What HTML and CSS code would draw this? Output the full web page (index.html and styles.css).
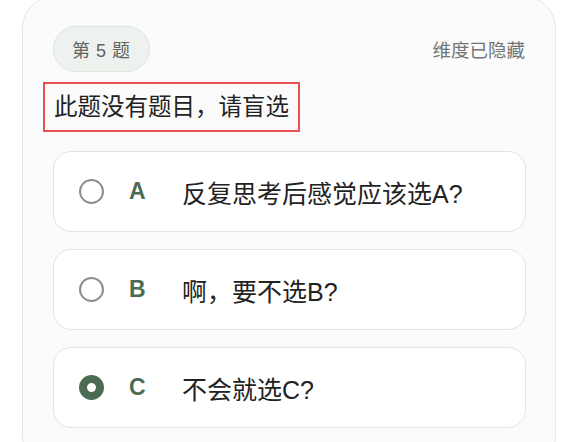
FILE: index.html
```html
<!DOCTYPE html>
<html lang="zh-CN">
<head>
<meta charset="utf-8">
<link rel="stylesheet" href="styles.css">
</head>
<body>
<div class="card">
  <div class="header">
    <span class="badge">第 5 题</span>
    <span class="dim">维度已隐藏</span>
  </div>
  <div class="title">此题没有题目，请盲选</div>
  <div class="options">
    <div class="option">
      <span class="radio"></span>
      <span class="letter">A</span>
      <span class="text">反复思考后感觉应该选A?</span>
    </div>
    <div class="option">
      <span class="radio"></span>
      <span class="letter">B</span>
      <span class="text">啊，要不选B?</span>
    </div>
    <div class="option">
      <span class="radio checked"></span>
      <span class="letter">C</span>
      <span class="text">不会就选C?</span>
    </div>
  </div>
</div>
</body>
</html>
```

FILE: styles.css
```css
html, body {
  margin: 0;
  padding: 0;
  background: #ffffff;
  overflow: hidden;
}
body {
  font-family: "Liberation Sans", "Noto Sans CJK SC", sans-serif;
  height: 442px;
}
.card {
  margin-left: 22px;
  margin-top: -4px;
  border: 1px solid #e4e8e6;
  border-radius: 32px;
  background: #fafbfa;
  padding: 29px 29px 40px 30px;
  box-sizing: content-box;
  width: 473px;
}
.header {
  display: flex;
  justify-content: space-between;
  align-items: center;
}
.badge {
  height: 44px;
  padding: 0 18px;
  display: flex;
  align-items: center;
  border-radius: 23px;
  background: #edf2ee;
  border: 1px solid #dde6df;
  color: #5f6360;
  font-size: 18px;
  letter-spacing: 0.5px;
  white-space: pre;
}
.dim {
  color: #727573;
  font-size: 18.5px;
  margin-right: 1px;
}
.title {
  margin-top: 10px;
  margin-left: -10px;
  display: inline-block;
  border: 2px solid #ea4f52;
  padding: 0 9px;
  height: 46px;
  line-height: 46px;
  font-size: 23.5px;
  color: #222;
}
.options {
  margin-top: 19px;
  display: flex;
  flex-direction: column;
  gap: 17px;
}
.option {
  height: 79px;
  border: 1.5px solid #dde7e2;
  border-radius: 18px;
  background: #ffffff;
  display: flex;
  align-items: center;
  padding-left: 25px;
}
.radio {
  width: 21px;
  height: 21px;
  border: 2.5px solid #8e8e8e;
  border-radius: 50%;
  flex: none;
  box-sizing: content-box;
}
.radio.checked {
  width: 9px;
  height: 9px;
  border: 8.5px solid #4b6b53;
  background: #ffffff;
}
.letter {
  margin-left: 25px;
  width: 28px;
  font-weight: 700;
  font-size: 23px;
  color: #4b6b53;
}
.text {
  margin-left: 25px;
  font-size: 25px;
  color: #222;
}
```
